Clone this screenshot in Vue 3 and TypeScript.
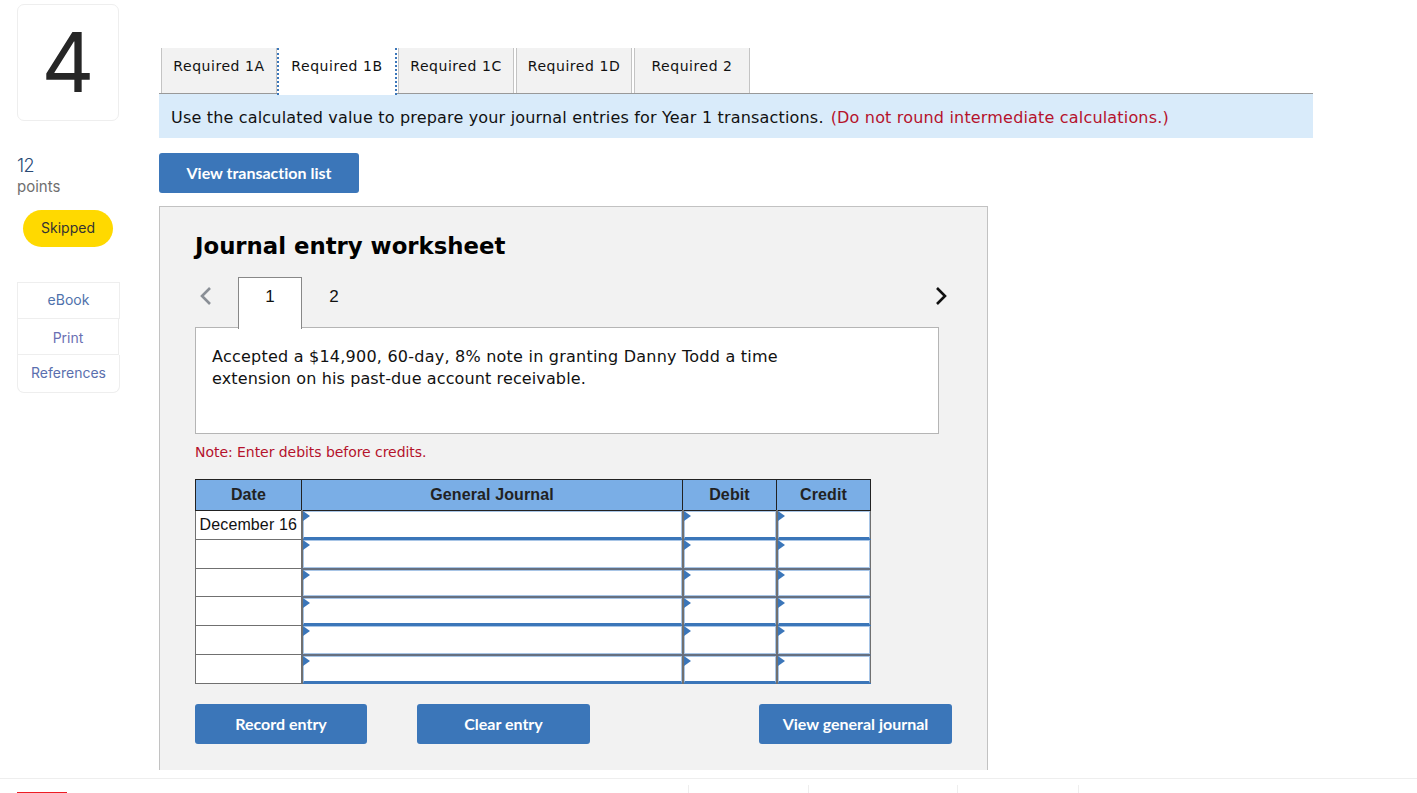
<script setup lang="ts">
import { ref } from 'vue'

type Row = { date: string; height: number; band: 'blue' | 'gray' }

const tabs = ['Required 1A', 'Required 1B', 'Required 1C', 'Required 1D', 'Required 2']
const activeTab = ref(1)
const sideLinks = ['eBook', 'Print', 'References']
const rows: Row[] = [
  { date: 'December 16', height: 29, band: 'blue' },
  { date: '', height: 29, band: 'gray' },
  { date: '', height: 28, band: 'gray' },
  { date: '', height: 29, band: 'blue' },
  { date: '', height: 29, band: 'gray' },
  { date: '', height: 29, band: 'blue' },
]
const footerTicks = [0, 1, 2, 3]
</script>

<template>
  <div class="page">
    <div class="content">
      <aside class="side">
        <div class="number-box">4</div>
        <div class="score">12</div>
        <div class="points">points</div>
        <div class="pill">Skipped</div>
        <nav class="side-links">
          <a v-for="link in sideLinks" :key="link" class="side-link" :class="`side-link--${link.toLowerCase()}`">{{ link }}</a>
        </nav>
      </aside>

      <main class="main">
        <div class="tabs">
          <button
            v-for="(tab, i) in tabs"
            :key="tab"
            type="button"
            class="tab"
            :class="{ 'tab--active': i === activeTab }"
            @click="activeTab = i"
          >
            {{ tab }}
          </button>
        </div>
        <div class="banner">
          <span>Use the calculated value to prepare your journal entries for Year 1 transactions.</span>
          <span class="banner-red">(Do not round intermediate calculations.)</span>
        </div>
        <button type="button" class="btn btn--list">View transaction list</button>

        <section class="sheet">
          <h2 class="sheet-title">Journal entry worksheet</h2>
          <div class="pager">
            <svg class="chev" width="14" height="20" viewBox="0 0 14 20">
              <path d="M12 2 4 10l8 8" fill="none" stroke="#8a8f96" stroke-width="2.6" />
            </svg>
            <span class="page-tab page-tab--on">1</span>
            <span class="page-tab">2</span>
            <svg class="chev chev--next" width="14" height="20" viewBox="0 0 14 20">
              <path d="M2 2l8 8-8 8" fill="none" stroke="#111" stroke-width="2.6" />
            </svg>
          </div>
          <div class="desc">
            Accepted a $14,900, 60-day, 8% note in granting Danny Todd a time<br />
            <span class="desc-tail">extension on his past-due account receivable.</span>
          </div>
          <p class="note">Note: Enter debits before credits.</p>

          <table class="journal">
            <thead>
              <tr>
                <th class="col-date">Date</th>
                <th class="col-gj">General Journal</th>
                <th class="col-num">Debit</th>
                <th class="col-num">Credit</th>
              </tr>
            </thead>
            <tbody>
              <tr
                v-for="(row, i) in rows"
                :key="i"
                :class="`row--${row.band}`"
                :style="{ height: row.height + 'px' }"
              >
                <td class="date-cell">{{ row.date }}</td>
                <td v-for="c in 3" :key="c" class="input-cell">
                  <div class="input-box"><i class="marker"></i></div>
                </td>
              </tr>
            </tbody>
          </table>

          <div class="actions">
            <button type="button" class="btn btn--record">Record entry</button>
            <button type="button" class="btn btn--clear">Clear entry</button>
            <button type="button" class="btn btn--journal">View general journal</button>
          </div>
        </section>
      </main>
    </div>

    <footer class="footer">
      <span class="footer-red"></span>
      <div class="footer-ticks">
        <span v-for="t in footerTicks" :key="t" class="tick" :class="`tick--${t}`"></span>
      </div>
    </footer>
  </div>
</template>

<style scoped>
.page {
  display: flex;
  flex-direction: column;
  width: 1417px;
  height: 793px;
  overflow: hidden;
  background: #fff;
  color: #111;
  font-family: "DejaVu Sans", sans-serif;
}

.content {
  display: flex;
  flex: 0 0 778px;
  height: 778px;
  overflow: hidden;
  padding: 4px 0 0 17px;
  box-sizing: border-box;
}

.side {
  flex: 0 0 103px;
  width: 103px;
  font-family: Inter, sans-serif;
}

.number-box {
  display: flex;
  align-items: center;
  justify-content: center;
  box-sizing: border-box;
  width: 102px;
  height: 117px;
  border: 1px solid #eee;
  border-radius: 7px;
  color: #262626;
  font-size: 82px;
  font-weight: 400;
  line-height: 1;
}

.score {
  margin-top: 35px;
  color: #2a4a75;
  font-size: 18px;
  font-weight: 300;
  line-height: 20px;
  letter-spacing: -0.6px;
}

.points {
  margin-top: 2px;
  color: #6f6f6f;
  font-size: 15px;
  line-height: 17px;
}

.pill {
  display: flex;
  align-items: center;
  justify-content: center;
  box-sizing: border-box;
  width: 90px;
  height: 37px;
  margin: 15px 0 0 6px;
  padding-bottom: 2px;
  border-radius: 19px;
  background: #ffd900;
  color: #333;
  font-size: 14px;
}

.side-links {
  display: flex;
  flex-direction: column;
  margin-top: 35px;
}

.side-link {
  display: flex;
  align-items: center;
  justify-content: center;
  box-sizing: border-box;
  border: 1px solid #eee;
  color: #4f72ac;
  font-size: 14px;
}

.side-link--ebook {
  height: 37px;
  padding-bottom: 2px;
}

.side-link--print {
  width: 102px;
  height: 36px;
  padding-top: 1px;
  border-top: 0;
  color: #6a70b3;
}

.side-link--references {
  height: 38px;
  padding-bottom: 2px;
  border-top: 0;
  border-radius: 0 0 7px 7px;
  color: #5a6fae;
}

.main {
  flex: 0 0 1154px;
  width: 1154px;
  margin-left: 39px;
  padding-top: 44px;
}

.tabs {
  display: flex;
  box-sizing: border-box;
  height: 46px;
  padding-left: 2px;
  border-bottom: 1px solid #999;
}

.tab {
  box-sizing: border-box;
  width: 116px;
  height: 45px;
  margin-right: 2px;
  padding: 0 0 10px;
  border: 0;
  border-left: 1px solid #c4c4c4;
  border-right: 1px solid #c4c4c4;
  background: #f2f2f2;
  color: #111;
  font: inherit;
  font-size: 14px;
  letter-spacing: 0.55px;
  white-space: nowrap;
}

.tab--active {
  position: relative;
  z-index: 1;
  width: 120px;
  height: 47px;
  margin: 0 1px 0 -2px;
  padding-bottom: 12px;
  border-left: 2px dotted #3b76b9;
  border-right: 2px dotted #3b76b9;
  background: #fff;
}

.banner {
  display: flex;
  align-items: center;
  gap: 7px;
  box-sizing: border-box;
  height: 44px;
  padding: 2px 0 0 12px;
  background: #d9ebfa;
  color: #111;
  font-size: 16px;
  letter-spacing: 0.18px;
}

.banner-red {
  color: #b5122c;
}

.btn {
  display: block;
  height: 40px;
  padding: 0 0 2px;
  border: 0;
  border-radius: 3px;
  background: #3b76b9;
  color: #fff;
  font-family: Lato, sans-serif;
  font-size: 16px;
  font-weight: 700;
  font-variant-ligatures: none;
}

.btn--list {
  width: 200px;
  margin-top: 15px;
}

.sheet {
  box-sizing: border-box;
  width: 829px;
  height: 564px;
  margin-top: 13px;
  padding: 0 35px;
  border: 1px solid #c2c2c2;
  border-bottom: 0;
  background: #f2f2f2;
}

.sheet-title {
  margin: 24px 0 0;
  color: #000;
  font-size: 22.8px;
  font-weight: 700;
  line-height: 30px;
}

.pager {
  position: relative;
  display: flex;
  align-items: flex-start;
  height: 52px;
  margin-top: 16px;
  padding-left: 43px;
}

.chev {
  position: absolute;
  left: 3px;
  top: 9px;
}

.chev--next {
  left: auto;
  right: 3px;
}

.page-tab {
  display: flex;
  align-items: center;
  justify-content: center;
  box-sizing: border-box;
  width: 64px;
  height: 39px;
  color: #111;
  font-family: "Liberation Sans", sans-serif;
  font-size: 17px;
}

.page-tab--on {
  position: relative;
  z-index: 1;
  height: 52px;
  padding-bottom: 13px;
  border: 1px solid #888;
  border-bottom: 0;
  background: #fff;
}

.desc {
  box-sizing: border-box;
  width: 744px;
  height: 107px;
  margin-top: -2px;
  padding: 18px 16px;
  border: 1px solid #b5b5b5;
  background: #fff;
  color: #111;
  font-size: 16px;
  letter-spacing: 0.23px;
  line-height: 22px;
}

.desc-tail {
  letter-spacing: 0.12px;
}

.note {
  margin: 10px 0 0;
  color: #b5122c;
  font-size: 14px;
  letter-spacing: -0.05px;
  line-height: 17px;
}

.journal {
  width: 675px;
  margin-top: 18px;
  border-collapse: collapse;
  table-layout: fixed;
  background: #fff;
  font-family: "Liberation Sans", sans-serif;
  font-size: 16px;
  letter-spacing: 0.12px;
}

.journal th {
  height: 30px;
  padding: 0;
  border: 1px solid #222;
  background: #7aaee6;
  color: #222;
  font-weight: 700;
}

.col-date {
  width: 105px;
}

.col-gj {
  width: 380px;
}

.col-num {
  width: 93px;
}

.journal td {
  padding: 0;
}

.date-cell {
  color: #111;
  text-align: center;
  white-space: nowrap;
}

.journal .date-cell {
  border: 1px solid #707070;
}

.journal .input-cell {
  height: 1px;
  border-left: 2px solid #707070;
  border-right: 2px solid #707070;
}

.journal .input-cell:last-child {
  border-right-width: 1px;
}

.journal .row--blue .input-cell {
  border-bottom: 1px solid #3b76b9;
}

.journal .row--gray .input-cell {
  border-bottom: 2px solid #667080;
}

.input-box {
  position: relative;
  box-sizing: border-box;
  height: 100%;
  min-height: 25px;
  border: 1px solid #a8c5e6;
  background: #fff;
}

.row--blue .input-box {
  border-bottom: 2px solid #3b76b9;
}

.marker {
  position: absolute;
  left: -1px;
  top: -1px;
  width: 0;
  height: 0;
  border-top: 5px solid transparent;
  border-bottom: 5px solid transparent;
  border-left: 7px solid #3b76b9;
}

.actions {
  display: flex;
  margin-top: 20px;
}

.btn--record {
  width: 172px;
}

.btn--clear {
  width: 173px;
  margin-left: 50px;
}

.btn--journal {
  width: 193px;
  margin-left: 169px;
}

.footer {
  position: relative;
  flex: 0 0 15px;
  box-sizing: border-box;
  border-top: 1px solid #eee;
  background: #fff;
}

.footer-red {
  position: absolute;
  left: 17px;
  bottom: 0;
  width: 50px;
  height: 1px;
  background: #ed1c24;
}

.footer-ticks {
  display: flex;
  height: 8px;
  margin: 6px 0 0 688px;
}

.tick {
  width: 1px;
  background: #eee;
}

.tick--1 {
  margin-left: 119px;
}

.tick--2 {
  margin-left: 148px;
}

.tick--3 {
  margin-left: 120px;
}
</style>

<style>
html,
body {
  margin: 0;
  overflow: hidden;
}
</style>
